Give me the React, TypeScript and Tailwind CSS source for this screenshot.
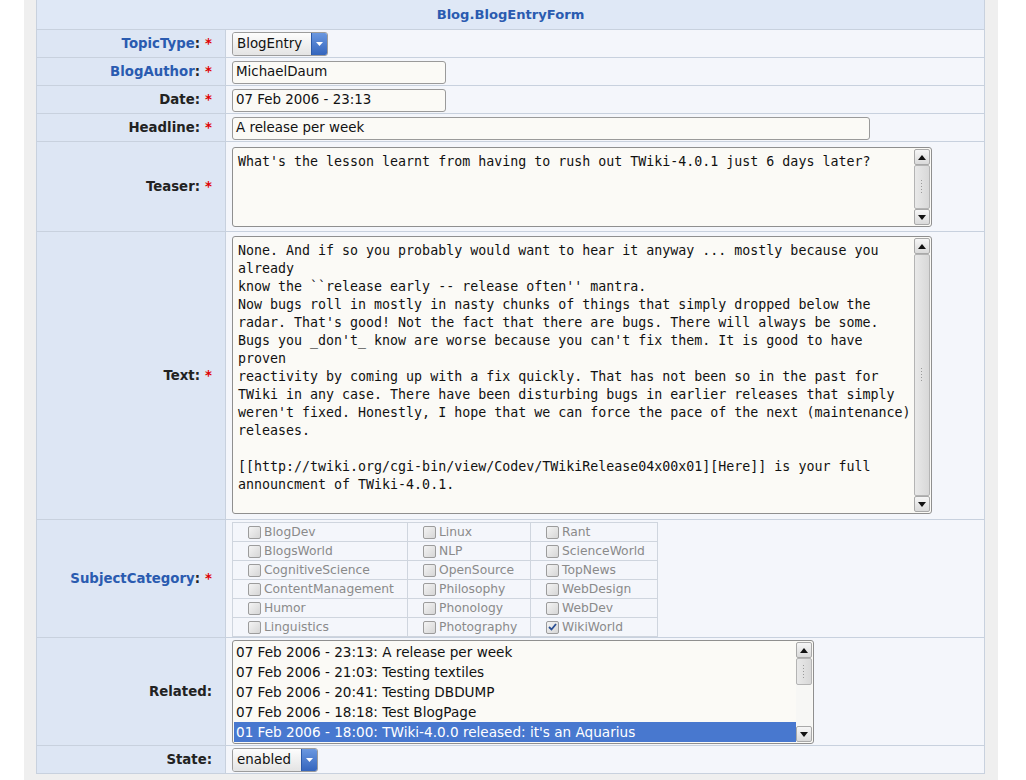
import React from "react";

const teaserLines = [
  "What's the lesson learnt from having to rush out TWiki-4.0.1 just 6 days later?",
];

const textLines = [
  "None. And if so you probably would want to hear it anyway ... mostly because you",
  "already",
  "know the ``release early -- release often'' mantra.",
  "Now bugs roll in mostly in nasty chunks of things that simply dropped below the",
  "radar. That's good! Not the fact that there are bugs. There will always be some.",
  "Bugs you _don't_ know are worse because you can't fix them. It is good to have",
  "proven",
  "reactivity by coming up with a fix quickly. That has not been so in the past for",
  "TWiki in any case. There have been disturbing bugs in earlier releases that simply",
  "weren't fixed. Honestly, I hope that we can force the pace of the next (maintenance)",
  "releases.",
  "",
  "[[http://twiki.org/cgi-bin/view/Codev/TWikiRelease04x00x01][Here]] is your full",
  "announcment of TWiki-4.0.1.",
];

// three columns of categories, read row by row
const categories = [
  ["BlogDev", "Linux", "Rant"],
  ["BlogsWorld", "NLP", "ScienceWorld"],
  ["CognitiveScience", "OpenSource", "TopNews"],
  ["ContentManagement", "Philosophy", "WebDesign"],
  ["Humor", "Phonology", "WebDev"],
  ["Linguistics", "Photography", "WikiWorld"],
];
const checked = ["WikiWorld"];

const related = [
  "07 Feb 2006 - 23:13: A release per week",
  "07 Feb 2006 - 21:03: Testing textiles",
  "07 Feb 2006 - 20:41: Testing DBDUMP",
  "07 Feb 2006 - 18:18: Test BlogPage",
  "01 Feb 2006 - 18:00: TWiki-4.0.0 released: it's an Aquarius",
];

const Arrow = ({ up }: { up?: boolean }) => (
  <svg width="8" height="5" viewBox="0 0 8 5">
    {up ? <polygon points="0,5 8,5 4,0" fill="#111" /> : <polygon points="0,0 8,0 4,5" fill="#111" />}
  </svg>
);

const Grip = () => (
  <svg width="2" height="14" viewBox="0 0 2 14">
    {[0, 3, 6, 9, 12].map((y) => (
      <rect key={y} x="0" y={y} width="1" height="1" fill="#9a9a9a" />
    ))}
  </svg>
);

const ScrollBtn = ({ up }: { up?: boolean }) => (
  <div className="h-[16px] w-[16px] shrink-0 flex items-center justify-center rounded-[2px] border border-[#a9a9a9] bg-gradient-to-b from-[#f6f6f6] to-[#dadada]">
    <Arrow up={up} />
  </div>
);

// thumb=undefined means the thumb fills the whole track
const ScrollBar = ({ thumb }: { thumb?: number }) => (
  <div className="w-[16px] flex flex-col shrink-0">
    <ScrollBtn up />
    <div className="flex-1 flex flex-col bg-[#f7f7f5]">
      <div
        className={`flex items-center justify-center rounded-[2px] border border-[#b4b4b4] bg-gradient-to-r from-[#e9e9e9] to-[#d8d8d8] ${thumb ? "" : "flex-1"}`}
        style={thumb ? { height: thumb } : undefined}
      >
        <Grip />
      </div>
    </div>
    <ScrollBtn />
  </div>
);

const Required = () => <span className="text-[#e00000] ml-[5px]">*</span>;

const labelCls =
  "w-[189px] shrink-0 border-r border-[#c8d1de] bg-[#dde6f4] flex items-center justify-end pr-[13px] font-bold text-[13.3px] text-[#222]";

const Label = ({ name, link }: { name: string; link?: boolean }) => (
  <div className={labelCls}>
    <span className={link ? "text-[#2a5bb0]" : ""}>{name}</span>:<Required />
  </div>
);

const Select = ({ value, width }: { value: string; width: string }) => (
  <div className={`flex h-[24px] ${width} rounded-[3px] border border-[#9c9c9c] overflow-hidden`}>
    <div className="flex-1 flex items-center pl-[4px] bg-gradient-to-b from-[#fdfdfd] to-[#e4e4e4] text-[13.4px] text-[#111]">
      {value}
    </div>
    <div className="w-[16px] flex items-center justify-center border-l border-[#2c5aa8] bg-gradient-to-b from-[#6b98e0] to-[#3465bd]">
      <svg width="7" height="4" viewBox="0 0 7 4">
        <polygon points="0,0 7,0 3.5,4" fill="#fff" />
      </svg>
    </div>
  </div>
);

const Input = ({ value, width }: { value: string; width: string }) => (
  <div className={`h-[23px] ${width} flex items-center px-[3px] rounded-[3px] border border-[#9a9a9a] bg-[#fbfaf6] text-[13.4px] text-[#111]`}>
    {value}
  </div>
);

const TextArea = ({ lines, height }: { lines: string[]; height: string }) => (
  <div className={`flex w-[700px] ${height} rounded-[3px] border border-[#8f8f8f] bg-[#fbfaf6] p-[1px]`}>
    <pre className="flex-1 overflow-hidden pl-[4px] pt-[4px] font-['DejaVu_Sans_Mono',monospace] text-[13.3px] leading-[18px] text-[#111]">
      {lines.join("\n")}
    </pre>
    <ScrollBar />
  </div>
);

const CheckBox = ({ on }: { on: boolean }) => (
  <div className="w-[13px] h-[13px] shrink-0 rounded-[2px] border border-[#9c9c9c] bg-gradient-to-br from-[#f4f4f4] to-[#d6d6d6] flex items-center justify-center">
    {on && (
      <svg width="9" height="8" viewBox="0 0 9 8">
        <polyline points="1,4 3.5,6.5 8,1" fill="none" stroke="#2a4f94" strokeWidth="1.8" />
      </svg>
    )}
  </div>
);

export default function App() {
  return (
    <div className="min-h-screen bg-white font-['DejaVu_Sans','Verdana',sans-serif]">
      <div className="ml-[24px] w-[974px] h-[780px] bg-[#efefef] px-[12px]">
        <div className="w-[949px] border-l border-r border-[#c8d1de]">
          {/* form title */}
          <div className="h-[30px] flex items-center justify-center border-b border-[#c8d1de] bg-[#dfe8f6] font-bold text-[13.1px] text-[#2a5bb0]">
            Blog.BlogEntryForm
          </div>

          <div className="flex h-[28px] border-b border-[#c8d1de]">
            <Label name="TopicType" link />
            <div className="flex-1 bg-[#f4f6fb] pl-[6px] pt-[2px]">
              <Select value="BlogEntry" width="w-[96px]" />
            </div>
          </div>

          <div className="flex h-[28px] border-b border-[#c8d1de]">
            <Label name="BlogAuthor" link />
            <div className="flex-1 bg-[#f4f6fb] pl-[6px] pt-[3px]">
              <Input value="MichaelDaum" width="w-[214px]" />
            </div>
          </div>

          <div className="flex h-[28px] border-b border-[#c8d1de]">
            <Label name="Date" />
            <div className="flex-1 bg-[#f4f6fb] pl-[6px] pt-[3px]">
              <Input value="07 Feb 2006 - 23:13" width="w-[214px]" />
            </div>
          </div>

          <div className="flex h-[28px] border-b border-[#c8d1de]">
            <Label name="Headline" />
            <div className="flex-1 bg-[#f4f6fb] pl-[6px] pt-[3px]">
              <Input value="A release per week" width="w-[638px]" />
            </div>
          </div>

          <div className="flex h-[90px] border-b border-[#c8d1de]">
            <Label name="Teaser" />
            <div className="flex-1 bg-[#f4f6fb] pl-[6px] pt-[5px]">
              <TextArea lines={teaserLines} height="h-[80px]" />
            </div>
          </div>

          <div className="flex h-[288px] border-b border-[#c8d1de]">
            <Label name="Text" />
            <div className="flex-1 bg-[#f4f6fb] pl-[6px] pt-[4px]">
              <TextArea lines={textLines} height="h-[278px]" />
            </div>
          </div>

          <div className="flex h-[118px] border-b border-[#c8d1de]">
            <Label name="SubjectCategory" link />
            <div className="flex-1 bg-[#f4f6fb] pl-[6px] pt-[2px]">
              <div className="grid grid-cols-[175px_123px_127px] w-[426px] border-l border-t border-[#cfd5de]">
                {categories.flat().map((c) => (
                  <div
                    key={c}
                    className="h-[19px] flex items-center gap-[3px] pl-[15px] border-r border-b border-[#cfd5de] text-[12.3px] text-[#8a8a8a]"
                  >
                    <CheckBox on={checked.includes(c)} />
                    <span>{c}</span>
                  </div>
                ))}
              </div>
            </div>
          </div>

          <div className="flex h-[108px] border-b border-[#c8d1de]">
            <div className={labelCls}>Related:</div>
            <div className="flex-1 bg-[#f4f6fb] pl-[6px] pt-[2px]">
              <div className="flex w-[582px] h-[104px] rounded-[3px] border border-[#8f8f8f] bg-[#fbfaf6] p-[1px]">
                <div className="flex-1 flex flex-col">
                  {related.map((r, i) => (
                    <div
                      key={r}
                      className={`h-[20px] flex items-center pl-[2px] text-[13.6px] ${
                        i === related.length - 1 ? "bg-[#4878cf] text-white" : "text-[#111]"
                      }`}
                    >
                      {r}
                    </div>
                  ))}
                </div>
                <ScrollBar thumb={27} />
              </div>
            </div>
          </div>

          <div className="flex h-[28px] border-b border-[#c8d1de]">
            <div className={labelCls}>State:</div>
            <div className="flex-1 bg-[#f4f6fb] pl-[6px] pt-[2px]">
              <Select value="enabled" width="w-[86px]" />
            </div>
          </div>
        </div>
      </div>
    </div>
  );
}
